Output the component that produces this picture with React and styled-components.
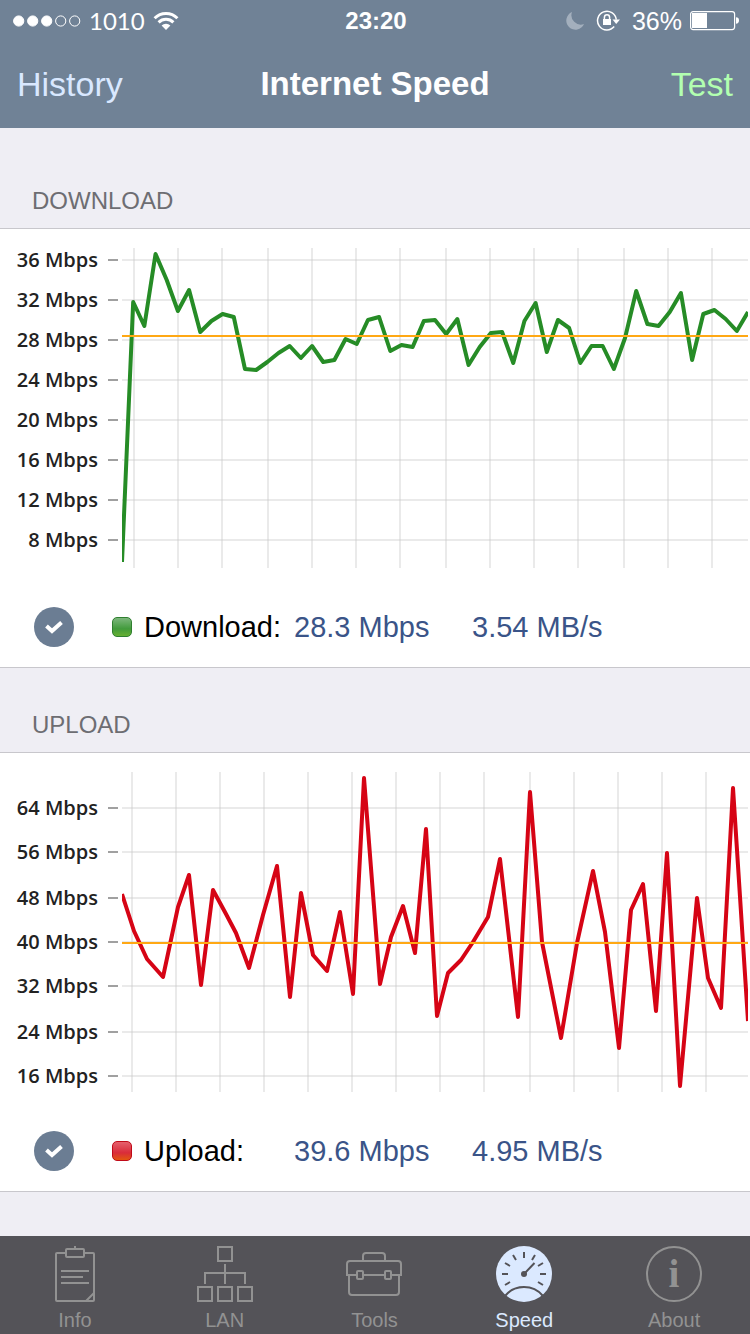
import React from 'react';
import styled, { createGlobalStyle } from 'styled-components';

const GlobalStyle = createGlobalStyle`
    * {
        box-sizing: border-box;
    }

    body {
        margin: 0;
        background: #efeef4;
        font-family: "Liberation Sans", Arial, sans-serif;
    }
`;

const Page = styled.div`
    display: flex;
    flex-direction: column;
    min-height: 100vh;
`;

const Header = styled.header`
    background: #708296;
    color: #fff;
`;

const StatusBar = styled.div`
    display: grid;
    grid-template-columns: 1fr auto 1fr;
    align-items: center;
    height: 40px;
    padding: 1px 11px 0 13px;
    font-size: 25px;
`;

const StatusGroup = styled.div`
    display: flex;
    align-items: center;
    justify-content: ${props => props.$end ? 'flex-end' : 'flex-start'};
    gap: 8px;
    line-height: 28px;
`;

const Carrier = styled.span`
    font-family: Lato, sans-serif;
    font-size: 24px;
`;

const Clock = styled.time`
    font-size: 24px;
    font-weight: bold;
    line-height: 28px;
`;

const Percent = styled.span`
    margin-left: 4px;
`;

const NavBar = styled.nav`
    display: grid;
    grid-template-columns: 1fr auto 1fr;
    align-items: center;
    height: 88px;
    padding: 0 17px;
`;

const NavButton = styled.button`
    justify-self: ${props => props.$end ? 'end' : 'start'};
    padding: 0;
    border: 0;
    background: none;
    color: ${props => props.$end ? '#b2ffb0' : '#d9e8ff'};
    font-family: inherit;
    font-size: 34px;
    line-height: 40px;
`;

const Title = styled.h1`
    margin: 0;
    font-size: 33px;
    font-weight: bold;
    line-height: 40px;
`;

const Content = styled.main`
    flex: 1;
    padding: 16px 0 44px;
`;

const SectionTitle = styled.h2`
    margin: 0;
    padding: 43px 32px 13px;
    color: #6d6d72;
    font-size: 24px;
    font-weight: normal;
    line-height: 28px;
`;

const Card = styled.div`
    border-top: 1px solid #c8c7cc;
    border-bottom: 1px solid #c8c7cc;
    background: #fff;
`;

const ChartSvg = styled.svg`
    display: block;
    width: 100%;
    height: auto;
`;

const AxisLabel = styled.text`
    fill: #222;
    font-family: "Open Sans", "Noto Sans", sans-serif;
    font-size: 20px;
    font-weight: 600;
    text-anchor: end;
`;

const Summary = styled.div`
    display: grid;
    grid-template-columns: 78px 32px 150px 178px 1fr;
    align-items: center;
    padding: 38px 34px 20px;
    font-size: 29px;
    line-height: 34px;
`;

const Toggle = styled.span`
    position: relative;
    width: 40px;
    height: 40px;

    svg {
        position: absolute;
        inset: 0;
        pointer-events: none;
    }
`;

const ToggleInput = styled.input`
    appearance: none;
    display: block;
    width: 40px;
    height: 40px;
    margin: 0;
    border-radius: 50%;
    background: #6b7d93;
`;

const Swatch = styled.span`
    width: 20px;
    height: 20px;
    border: 1px solid ${props => props.$border};
    border-radius: 5px;
    background: ${props => props.$fill};
`;

const SummaryLabel = styled.label`
    color: #000;
`;

const Value = styled.span`
    color: #3a5488;
`;

const TabBar = styled.nav`
    display: grid;
    grid-template-columns: repeat(5, 1fr);
    height: 98px;
    padding-right: 1px;
    background: #545358;
`;

const Tab = styled.button`
    display: flex;
    flex-direction: column;
    align-items: center;
    gap: 6px;
    padding: 10px 0 0;
    border: 0;
    background: none;
    color: ${props => props.$active ? '#dbe9ff' : '#929292'};
    font-family: inherit;
    font-size: 20px;
    line-height: 24px;
`;

const TabIcon = styled.svg`
    width: 56px;
    height: 56px;
    fill: none;
    stroke: currentColor;
    stroke-width: 2;
`;

// vertical positions inside the 626 x 320 plot, evenly spaced samples
const downloadSamples = [
    314, 54, 78, 6, 32, 63, 42, 84, 73, 66, 69, 121, 122, 114, 105, 98, 110, 98, 114, 112,
    91, 96, 72, 69, 103, 97, 99, 73, 72, 86, 71, 117, 99, 85, 84, 115, 73, 55, 104, 72,
    80, 115, 98, 98, 121, 90, 43, 76, 78, 64, 45, 112, 66, 62, 71, 83, 64,
];

const downloadChart = {
    color: '#268c26',
    average: 88,
    columns: [12, 56, 100, 146, 190, 234, 278, 324, 368, 412, 456, 502, 546, 590],
    rows: [[36, 12], [32, 52], [28, 92], [24, 132], [20, 172], [16, 212], [12, 252], [8, 292]],
    points: downloadSamples.map((y, i) => [i * 626 / 56, y]),
};

const uploadChart = {
    color: '#d60415',
    average: 171,
    columns: [10, 54, 98, 142, 186, 230, 274, 318, 362, 408, 452, 496, 540, 584],
    rows: [[64, 36], [56, 80], [48, 126], [40, 170], [32, 214], [24, 260], [16, 304]],
    points: [
        [0, 122], [12, 159], [25, 187], [41, 205], [56, 135], [67, 103], [79, 213], [91, 118],
        [104, 142], [114, 161], [127, 196], [141, 143], [155, 94], [168, 225], [179, 121],
        [191, 183], [205, 199], [218, 140], [231, 222], [242, 6], [258, 212], [269, 165],
        [281, 134], [293, 181], [304, 57], [315, 244], [326, 201], [339, 188], [351, 170],
        [366, 145], [378, 87], [396, 245], [408, 20], [420, 170], [439, 266], [455, 171],
        [471, 99], [483, 160], [497, 276], [509, 138], [521, 112], [534, 239], [545, 81],
        [558, 314], [575, 126], [586, 206], [599, 236], [611, 16], [626, 249],
    ],
};

const sections = [
    {
        id: 'download',
        title: 'DOWNLOAD',
        label: 'Download:',
        rate: '28.3 Mbps',
        bytes: '3.54 MB/s',
        chart: downloadChart,
        border: '#2f7f2f',
        fill: 'linear-gradient(#7db77d, #429b3c 60%, #66b032)',
    },
    {
        id: 'upload',
        title: 'UPLOAD',
        label: 'Upload:',
        rate: '39.6 Mbps',
        bytes: '4.95 MB/s',
        chart: uploadChart,
        border: '#c00a18',
        fill: 'linear-gradient(#e5606c, #d92c3a 60%, #e2560f)',
    },
];

const Chart = ({ id, title, chart: { color, average, columns, rows, points } }) => {
    return (
        <ChartSvg viewBox="0 0 750 340" role="img" aria-label={`${title} speed chart`}>
            <clipPath id={`${id}-plot`}>
                <rect width="626" height="320" />
            </clipPath>
            {rows.map(([value, y]) => (
                <g key={value}>
                    <AxisLabel x="98" y={y + 26}>{value} Mbps</AxisLabel>
                    <path d={`M108 ${y + 19}h10`} stroke="#a0a0a0" strokeWidth="2" />
                </g>
            ))}
            <g transform="translate(122 19)" fill="none">
                <g stroke="#c8c8c8" strokeOpacity="0.38" strokeWidth="2">
                    {rows.map(([value, y]) => <path key={value} d={`M0 ${y}h626`} />)}
                    {columns.map(x => <path key={x} d={`M${x} 0v320`} />)}
                </g>
                <g clipPath={`url(#${id}-plot)`}>
                    <polyline points={points.join(' ')} stroke={color} strokeWidth="4" strokeLinejoin="round" />
                    <path d={`M0 ${average}h626`} stroke="#ffa814" strokeWidth="2" />
                </g>
            </g>
        </ChartSvg>
    );
}

const SpeedSection = ({ section }) => {
    return (
        <section>
            <SectionTitle>{section.title}</SectionTitle>
            <Card>
                <Chart id={section.id} title={section.label} chart={section.chart} />
                <Summary>
                    <Toggle>
                        <ToggleInput type="checkbox" id={`show-${section.id}`} defaultChecked />
                        <svg viewBox="0 0 40 40" fill="none" stroke="#fff" strokeWidth="4">
                            <path d="M12.5 19l5.5 5 9.5-8.5" />
                        </svg>
                    </Toggle>
                    <Swatch $border={section.border} $fill={section.fill} />
                    <SummaryLabel htmlFor={`show-${section.id}`}>{section.label}</SummaryLabel>
                    <Value>{section.rate}</Value>
                    <Value>{section.bytes}</Value>
                </Summary>
            </Card>
        </section>
    );
}

const SignalDots = () => (
    <svg width="68" height="12" viewBox="0 0 68 12" stroke="#fff">
        {[0, 1, 2, 3, 4].map(i => (
            <circle key={i} cx={5.7 + i * 14} cy="6" r="5.1" fill={i < 3 ? '#fff' : 'none'} />
        ))}
    </svg>
);

const WifiIcon = () => (
    <svg width="26" height="20" viewBox="0 0 26 20" fill="none" stroke="#fff" strokeWidth="3">
        <path d="M1.6 7.2a16.2 16.2 0 0 1 22.8 0" />
        <path d="M5.6 11.4a10.5 10.5 0 0 1 14.8 0" />
        <path d="M13 19l-4.4-4.4a6.2 6.2 0 0 1 8.8 0z" fill="#fff" stroke="none" />
    </svg>
);

const MoonIcon = () => (
    <svg width="23" height="20" viewBox="0 0 23 20">
        <path d="M7 1a9.2 9.2 0 1 0 12 12A9.4 9.4 0 0 1 7 1z" fill="#a3afbd" />
    </svg>
);

const RotationLockIcon = () => (
    <svg width="24" height="22" viewBox="0 0 24 22" fill="none" stroke="#fff" strokeWidth="1.5">
        <path d="M18.2 16.6A9.4 9.4 0 1 1 20.3 9.6" />
        <path d="M16.5 9.6h7.5l-3.8 4.4z" fill="#fff" stroke="none" />
        <rect x="7" y="9" width="8" height="6" fill="#fff" stroke="none" />
        <path d="M8.4 9.5V7.4a2.6 2.6 0 0 1 5.2 0v2.1" />
    </svg>
);

const BatteryIcon = () => (
    <svg width="49" height="20" viewBox="0 0 49 20" fill="#fff">
        <rect x="0.6" y="0.6" width="44" height="18" rx="2.5" fill="none" stroke="#fff" strokeWidth="1.2" />
        <rect x="2" y="2" width="15" height="15" />
        <path d="M46 6.3c2 0 3 1.2 3 3.2s-1 3.2-3 3.2z" />
    </svg>
);

const InfoIcon = () => (
    <TabIcon viewBox="0 0 56 56">
        <path d="M19 7H10a1 1 0 0 0-1 1v46a1 1 0 0 0 1 1h36a1 1 0 0 0 1-1V8a1 1 0 0 0-1-1h-9" />
        <rect x="19" y="3" width="18" height="8" rx="1" />
        <path d="M28 0v3M14 25h28M14 31h22M14 37h28M47 47l-8 8" />
    </TabIcon>
);

const LanIcon = () => (
    <TabIcon viewBox="0 0 56 56">
        <rect x="21" y="1" width="14" height="14" />
        <path d="M28 18v20M8 38V27h40v11" />
        <rect x="1" y="41" width="14" height="14" />
        <rect x="21" y="41" width="14" height="14" />
        <rect x="41" y="41" width="14" height="14" />
    </TabIcon>
);

const ToolsIcon = () => (
    <TabIcon viewBox="0 0 56 56">
        <path d="M17 15v-5a3 3 0 0 1 3-3h16a3 3 0 0 1 3 3v5" />
        <path d="M11 29H1V18a3 3 0 0 1 3-3h48a3 3 0 0 1 3 3v11H45M17 29h22" />
        <path d="M3 29v17a3 3 0 0 0 3 3h44a3 3 0 0 0 3-3V29" />
        <rect x="11" y="25" width="6" height="8" rx="1" />
        <rect x="39" y="25" width="6" height="8" rx="1" />
    </TabIcon>
);

const SpeedIcon = () => (
    <TabIcon viewBox="0 0 56 56">
        <circle cx="28" cy="28" r="28" fill="currentColor" stroke="none" />
        <g stroke="#545358">
            <path d="M28 6v6M6 28h6M44 28h6M9 17l5 3M17 9l3 5M47 17l-5 3M39 9l-3 5M9 39l5-3M47 39l-5-3M28 28l10.5-11" />
            <path d="M9.5 49.5C14 44 20 41 28 41s14 3 18.5 8.5" />
        </g>
        <circle cx="28" cy="28" r="3" fill="#545358" stroke="none" />
    </TabIcon>
);

const IconLetter = styled.text`
    fill: currentColor;
    stroke: none;
    font-family: "Liberation Serif", serif;
    font-size: 39px;
    font-weight: bold;
    text-anchor: middle;
`;

const AboutIcon = () => (
    <TabIcon viewBox="0 0 56 56">
        <circle cx="28" cy="28" r="27" />
        <IconLetter x="28" y="41">i</IconLetter>
    </TabIcon>
);

const tabs = [
    { title: 'Info', Icon: InfoIcon },
    { title: 'LAN', Icon: LanIcon },
    { title: 'Tools', Icon: ToolsIcon },
    { title: 'Speed', Icon: SpeedIcon, active: true },
    { title: 'About', Icon: AboutIcon },
];

const App = () => {
    return (
        <Page>
            <GlobalStyle />
            <Header>
                <StatusBar>
                    <StatusGroup>
                        <SignalDots />
                        <Carrier>1010</Carrier>
                        <WifiIcon />
                    </StatusGroup>
                    <Clock>23:20</Clock>
                    <StatusGroup $end>
                        <MoonIcon />
                        <RotationLockIcon />
                        <Percent>36%</Percent>
                        <BatteryIcon />
                    </StatusGroup>
                </StatusBar>
                <NavBar>
                    <NavButton type="button">History</NavButton>
                    <Title>Internet Speed</Title>
                    <NavButton type="button" $end>Test</NavButton>
                </NavBar>
            </Header>
            <Content>
                {sections.map(section => <SpeedSection key={section.id} section={section} />)}
            </Content>
            <TabBar>
                {tabs.map(({ title, Icon, active }) => (
                    <Tab key={title} type="button" $active={active}>
                        <Icon />
                        {title}
                    </Tab>
                ))}
            </TabBar>
        </Page>
    );
}

export default App;
